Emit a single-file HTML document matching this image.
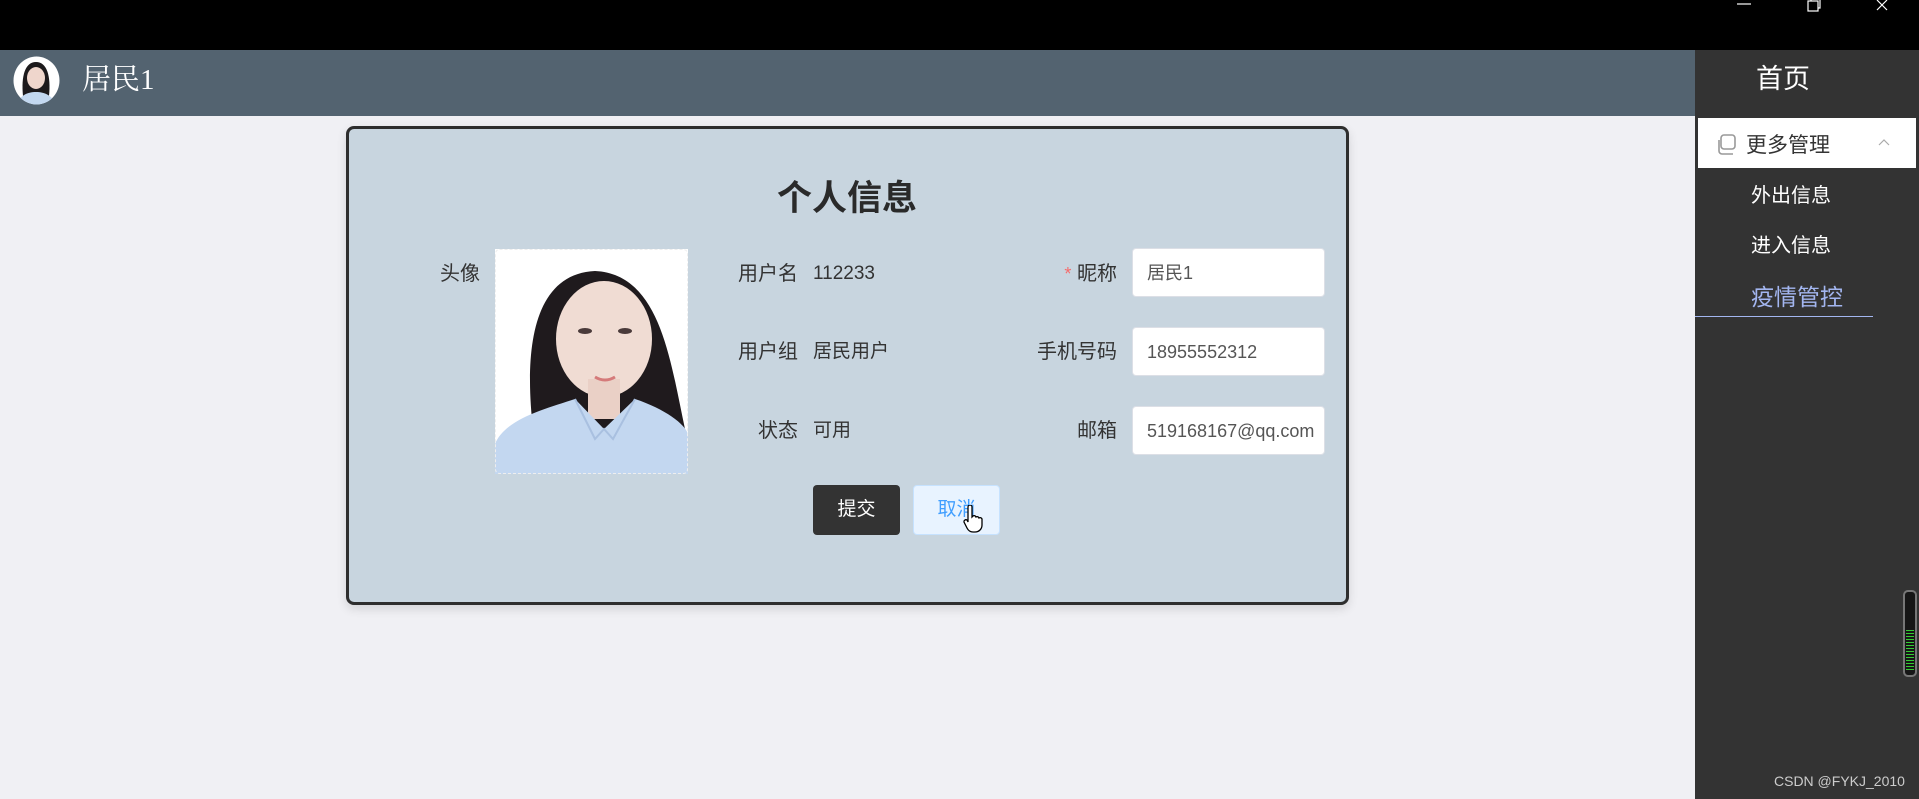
<!DOCTYPE html>
<html><head><meta charset="utf-8"><style>
*{margin:0;padding:0;box-sizing:border-box}
body{width:1919px;height:799px;overflow:hidden;background:#f0f0f4;font-family:"Liberation Sans","Noto Sans CJK SC",sans-serif;position:relative;color:#333}
.abs{position:absolute}
.top{left:0;top:0;width:1919px;height:50px;background:#000}
.hdr{left:0;top:50px;width:1695px;height:66px;background:#536370}
.side{left:1695px;top:50px;width:224px;height:749px;background:#333}
.card{left:346px;top:126px;width:1003px;height:479px;background:#c8d5df;border:3px solid #2e2e2e;border-radius:8px;box-shadow:0 4px 10px rgba(0,0,0,.12)}
.lbl{font-size:20px;color:#333;text-align:right;width:120px;line-height:24px}
.val{font-size:19px;color:#333;line-height:24px}
.inp{left:1132px;width:193px;height:49px;background:#fff;border:1px solid #dcdfe6;border-radius:4px;font-size:18px;color:#555;padding-left:14px;line-height:49px;white-space:nowrap;overflow:hidden}
.sub{font-size:20px;color:#fff;left:1751px}
</style></head><body>
<div class="abs top"></div>
<svg class="abs" style="left:1735px;top:0" width="184" height="14"><line x1="2" y1="4" x2="16" y2="4" stroke="#fff" stroke-width="1.2"/><rect x="73" y="1" width="10" height="10" fill="none" stroke="#fff" stroke-width="1.2"/><path d="M76 1V-2h9v10h-2" fill="none" stroke="#fff" stroke-width="1.2"/><path d="M142 0l10 10M152 0l-10 10" stroke="#fff" stroke-width="1.2"/></svg>
<div class="abs hdr"></div>
<svg class="abs" style="left:13px;top:56px" width="47" height="49" viewBox="0 0 47 49"><defs><clipPath id="c1"><ellipse cx="23.5" cy="24.5" rx="23" ry="24"/></clipPath></defs><g clip-path="url(#c1)"><rect width="47" height="49" fill="#fff"/><path d="M10 40 C8 20 12 6 23 6 C34 6 38 20 36 40Z" fill="#1d1a1c"/><ellipse cx="23" cy="22" rx="9" ry="11" fill="#efd6cc"/><path d="M4 49 C6 40 14 36 23 36 C32 36 40 40 43 49Z" fill="#c3d8f0"/></g></svg>
<div class="abs" style="left:82px;top:63px;font-family:'Liberation Serif','Noto Serif CJK SC',serif;font-size:29px;color:#fff;line-height:34px">居民1</div>

<div class="abs side"></div>
<div class="abs" style="left:1695px;top:62px;width:176px;text-align:center;font-size:27px;color:#fff;line-height:34px">首页</div>
<div class="abs" style="left:1698px;top:118px;width:218px;height:50px;background:#fff"></div>
<svg class="abs" style="left:1715px;top:134px" width="22" height="22"><rect x="6" y="1" width="14" height="14" rx="3" fill="none" stroke="#999" stroke-width="1.6"/><path d="M4 6v11a3 3 0 0 0 3 3h11" fill="none" stroke="#999" stroke-width="1.6"/></svg>
<div class="abs" style="left:1746px;top:132px;font-size:21px;color:#333;line-height:28px">更多管理</div>
<svg class="abs" style="left:1877px;top:137px" width="14" height="10"><path d="M2 8l5-5 5 5" fill="none" stroke="#aaa" stroke-width="1.2"/></svg>
<div class="abs sub" style="top:183px;line-height:26px">外出信息</div>
<div class="abs sub" style="top:233px;line-height:26px">进入信息</div>
<div class="abs" style="left:1751px;top:282px;font-size:23px;color:#a3b6f0;line-height:30px">疫情管控</div>
<div class="abs" style="left:1695px;top:316px;width:178px;height:1px;background:#a3b6f0"></div>
<div class="abs" style="left:1903px;top:590px;width:14px;height:87px;border:2px solid #777;border-radius:5px;background:#161616"></div>
<div class="abs" style="left:1906px;top:630px;width:8px;height:42px;background:repeating-linear-gradient(#3c3 0 1px,transparent 1px 3px)"></div>
<div class="abs" style="left:1774px;top:773px;font-size:14px;color:#ccc">CSDN @FYKJ_2010</div>

<div class="abs card"></div>
<div class="abs" style="left:647px;top:178px;width:400px;text-align:center;font-size:35px;font-weight:bold;color:#2a2a2a;line-height:42px">个人信息</div>
<div class="abs lbl" style="left:360px;top:262px;width:120px">头像</div>
<svg class="abs" style="left:495px;top:249px" width="193" height="225" viewBox="0 0 193 225"><rect width="193" height="225" fill="#fff"/><path d="M38 180 C30 110 34 25 100 22 C165 25 175 110 190 180Z" fill="#1f1a1d"/><ellipse cx="109" cy="90" rx="48" ry="58" fill="#f0dcd3"/><rect x="93" y="130" width="32" height="40" fill="#ead0c6"/><path d="M0 195 C10 170 50 160 80 150 L109 180 L140 150 C170 160 190 175 193 185 V225 H0Z" fill="#c3d7f0"/><path d="M80 150 L100 190 L109 180 L118 190 L140 150" fill="none" stroke="#a9c0e0" stroke-width="2"/><ellipse cx="90" cy="82" rx="7" ry="3" fill="#4a3a3a"/><ellipse cx="130" cy="82" rx="7" ry="3" fill="#4a3a3a"/><path d="M100 128 Q110 134 120 128" stroke="#d57a7a" stroke-width="3" fill="none"/><rect x="0.5" y="0.5" width="192" height="224" rx="4" fill="none" stroke="#eee" stroke-dasharray="3 2"/></svg>

<div class="abs lbl" style="left:678px;top:262px">用户名</div>
<div class="abs val" style="left:813px;top:262px">112233</div>
<div class="abs lbl" style="left:678px;top:340px">用户组</div>
<div class="abs val" style="left:813px;top:340px">居民用户</div>
<div class="abs lbl" style="left:678px;top:419px">状态</div>
<div class="abs val" style="left:813px;top:419px">可用</div>

<div class="abs lbl" style="left:997px;top:262px"><span style="color:#f56c6c;font-size:18px">*</span> 昵称</div>
<div class="abs lbl" style="left:997px;top:340px">手机号码</div>
<div class="abs lbl" style="left:997px;top:419px">邮箱</div>
<div class="abs inp" style="top:248px">居民1</div>
<div class="abs inp" style="top:327px">18955552312</div>
<div class="abs inp" style="top:406px;padding-left:14px">519168167@qq.com</div>

<div class="abs" style="left:813px;top:485px;width:87px;height:50px;background:#333;border-radius:4px;color:#fff;font-size:19px;text-align:center;line-height:50px">提交</div>
<div class="abs" style="left:913px;top:485px;width:87px;height:50px;background:#e8f3ff;border:1px solid #c6e2ff;border-radius:4px;color:#409eff;font-size:19px;text-align:center;line-height:48px">取消</div>
<svg class="abs" style="left:963px;top:505px" width="20" height="28" viewBox="0 0 20 28"><path d="M5 2a2 2 0 0 1 4 0v10l1-1a2 2 0 0 1 3 1a2 2 0 0 1 3 1a2 2 0 0 1 3 1v6c0 4-3 7-7 7h-2c-3 0-5-2-6-4L1 17a2 2 0 0 1 3-2l1 2Z" fill="#fff" stroke="#000" stroke-width="1.3"/></svg>
</body></html>
